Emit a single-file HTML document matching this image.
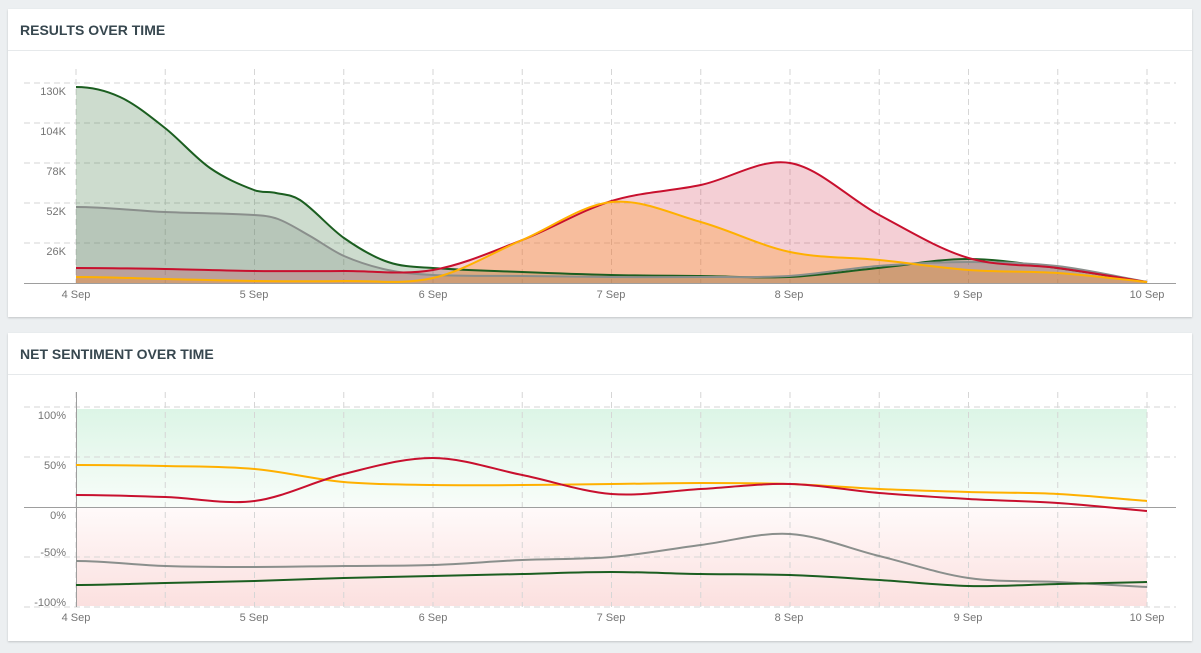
<!DOCTYPE html>
<html><head><meta charset="utf-8">
<style>
html,body{margin:0;padding:0;background:#eceff1;width:1201px;height:653px;overflow:hidden;font-family:"Liberation Sans",sans-serif}
.card{position:absolute;left:8px;width:1184px;background:#fff;box-shadow:0 1px 2px rgba(0,0,0,.18)}
.hd{height:41px;border-bottom:1px solid #e6e9eb;font-weight:bold;font-size:14px;color:#37474f;line-height:42px;padding-left:12px}
svg{position:absolute;left:0;top:0}
text{font-family:"Liberation Sans",sans-serif;font-size:11px;fill:#757575}
</style></head><body>
<div class="card" style="top:9px;height:308px"><div class="hd">RESULTS OVER TIME</div></div>
<div class="card" style="top:333px;height:308px"><div class="hd">NET SENTIMENT OVER TIME</div></div>
<svg width="1201" height="653" id="s">
<defs>
<linearGradient id="gg" x1="0" y1="0" x2="0" y2="1"><stop offset="0" stop-color="#dcf5e6"/><stop offset="1" stop-color="#f8fdf9"/></linearGradient>
<linearGradient id="rg" x1="0" y1="0" x2="0" y2="1"><stop offset="0" stop-color="#fffafa"/><stop offset="1" stop-color="#fbe0df"/></linearGradient>
</defs>
<g id="g1"></g>
</svg>
<script>
var s=document.getElementById('g1'),h='';
var X=[76,254,433,611,789,968,1147],L=['4 Sep','5 Sep','6 Sep','7 Sep','8 Sep','9 Sep','10 Sep'];
var XS=[];for(var i=0;i<13;i++)XS.push(76+i*89.25);
function pts(ys){return ys.map(function(y,i){return [XS[i],y];});}
function cr(p){var d='M'+p[0][0]+','+p[0][1];for(var i=0;i<p.length-1;i++){var p0=p[i-1]||p[i],p1=p[i],p2=p[i+1],p3=p[i+2]||p2;
var dx=p2[0]-p1[0];
var m1=(p2[1]-p0[1])/((p2[0]-p0[0])||1),m2=(p3[1]-p1[1])/((p3[0]-p1[0])||1);
if(i==0)m1=0;if(i==p.length-2)m2=(p2[1]-p1[1])/dx;
d+=' C'+(p1[0]+dx/3).toFixed(1)+','+(p1[1]+m1*dx/3).toFixed(1)+' '+(p2[0]-dx/3).toFixed(1)+','+(p2[1]-m2*dx/3).toFixed(1)+' '+p2[0]+','+p2[1];}return d;}
for(var i=0;i<13;i++){var x=XS[i];h+='<line x1="'+x+'" y1="69" x2="'+x+'" y2="283" stroke="#d6d6d6" stroke-dasharray="6,4"/>';}
var yl=['130K','104K','78K','52K','26K'];for(var i=0;i<5;i++){var y=83+i*40;h+='<line x1="24" y1="'+y+'" x2="1176" y2="'+y+'" stroke="#d6d6d6" stroke-dasharray="6,4"/><text x="66" y="'+(y+12)+'" text-anchor="end">'+yl[i]+'</text>';}
var A=[[[76,87],[120,97],[165,128],[210,168],[254,190],[276,193],[300,200],[344,238],[388,262],[433,268],[522,272],[611,275],[700,276],[789,277],[878,268],[968,259],[1057,268],[1147,282]],'#1b5e20','rgba(27,94,32,0.22)'],
B=[[[76,207],[165,212],[254,215],[278,219],[310,236],[344,256],[388,270],[433,275],[522,276],[611,277],[700,277],[789,276],[878,266],[968,262],[1057,266],[1147,282]],'#8a8f8c','rgba(120,130,125,0.25)'],
C=[pts([268,269,271,271,270,240,201,185,163,215,258,268,282]),'#c8102e','rgba(200,16,46,0.2)'],
D=[pts([277,279,281,281,278,240,202,222,252,260,270,273,282]),'#ffb000','rgba(255,150,30,0.3)'];
[A,B,C,D].forEach(function(a){h+='<path d="'+cr(a[0])+' L1147,283 L76,283 Z" fill="'+a[2]+'"/>';});
[A,B,C,D].forEach(function(a){h+='<path d="'+cr(a[0])+'" fill="none" stroke="'+a[1]+'" stroke-width="2"/>';});
h+='<line x1="24" y1="283.5" x2="1176" y2="283.5" stroke="#9e9e9e"/>';
for(var i=0;i<7;i++)h+='<text x="'+X[i]+'" y="298" text-anchor="middle">'+L[i]+'</text>';
h+='<rect x="76" y="409" width="1071" height="98" fill="url(#gg)"/><rect x="76" y="507" width="1071" height="99" fill="url(#rg)"/>';
for(var i=0;i<13;i++){var x=XS[i];h+='<line x1="'+x+'" y1="392" x2="'+x+'" y2="607" stroke="#d6d6d6" stroke-dasharray="6,4"/>';}
var y2=[[407,'100%',419],[457,'50%',469],[557,'-50%',556],[607,'-100%',606]];
y2.forEach(function(q){h+='<line x1="24" y1="'+q[0]+'" x2="1176" y2="'+q[0]+'" stroke="#d6d6d6" stroke-dasharray="6,4"/><text x="66" y="'+q[2]+'" text-anchor="end">'+q[1]+'</text>';});
h+='<line x1="24" y1="507.5" x2="1176" y2="507.5" stroke="#9e9e9e"/><text x="66" y="519" text-anchor="end">0%</text>';
h+='<line x1="76.5" y1="392" x2="76.5" y2="607" stroke="#9e9e9e"/>';
var S=[
[pts([465,466,469,482,485,485,484,483,484,489,492,494,501]),'#ffb000'],
[pts([495,497,501,474,458,475,494,489,484,493,499,503,511]),'#c8102e'],
[pts([561,566,567,566,565,560,557,545,534,556,578,582,587]),'#8a8f8c'],
[pts([585,583,581,578,576,574,572,574,575,580,586,584,582]),'#1b5e20']];
S.forEach(function(a){h+='<path d="'+cr(a[0])+'" fill="none" stroke="'+a[1]+'" stroke-width="2"/>';});
for(var i=0;i<7;i++)h+='<text x="'+X[i]+'" y="621" text-anchor="middle">'+L[i]+'</text>';
s.innerHTML=h;
</script>
</body></html>
